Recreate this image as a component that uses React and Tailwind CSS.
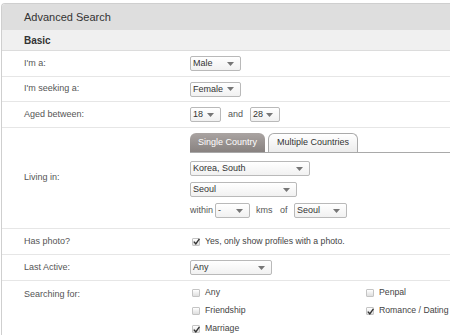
import React from "react";

const Arrow = () => (
  <svg width="7" height="4" viewBox="0 0 7 4" className="shrink-0">
    <path d="M0 0 L7 0 L3.5 4 Z" fill="#767676" />
  </svg>
);

const Select = ({ value, width }) => (
  <div
    className={`h-[15px] ${width} flex items-center justify-between border border-[#b9b9b9] rounded-[2px] bg-gradient-to-b from-white to-[#f1f1f1] pl-[2px] pr-[6px] text-[9px] text-[#333] leading-none`}
  >
    <span>{value}</span>
    <Arrow />
  </div>
);

const Check = ({ checked, label }) => (
  <div className="flex items-center gap-[5px] h-[18px] whitespace-nowrap">
    <div className="w-[8px] h-[8px] shrink-0 border border-[#c4c4c4] rounded-[1px] bg-gradient-to-b from-white to-[#dedede] flex items-center justify-center">
      {checked && (
        <svg width="7" height="7" viewBox="0 0 7 7" className="shrink-0">
          <path d="M0.8 3.6 L2.8 5.8 L6.4 0.8" stroke="#333" strokeWidth="1.4" fill="none" />
        </svg>
      )}
    </div>
    <span className="text-[8.7px] text-[#444]">{label}</span>
  </div>
);

const Row = ({ label, children }) => (
  <div className="flex border-b border-[#e6e6e6]">
    <div className="w-[188px] shrink-0 pl-[22px] text-[9px] text-[#555] flex items-center">{label}</div>
    <div className="flex-1 min-w-0">{children}</div>
  </div>
);

export default function App() {
  return (
    <div className="w-[450px] h-[335px] overflow-hidden bg-white font-['Liberation_Sans',Arial,sans-serif]">
      <div className="mt-[3px] ml-[1px] border-l border-t border-[#cfcfcf] rounded-tl-[4px] overflow-hidden">
        <div className="h-[26px] bg-[#dedede] pl-[22px] flex items-center text-[11px] text-[#333]">
          Advanced Search
        </div>
        <div className="h-[21px] bg-[#f0f0f0] border-b border-[#dcdcdc] pl-[22px] flex items-center text-[10px] font-bold text-[#333]">
          Basic
        </div>

        <Row label="I'm a:">
          <div className="h-[25px] flex items-center">
            <Select value="Male" width="w-[51px]" />
          </div>
        </Row>
        <Row label="I'm seeking a:">
          <div className="h-[24px] flex items-center">
            <Select value="Female" width="w-[51px]" />
          </div>
        </Row>
        <Row label="Aged between:">
          <div className="h-[25px] flex items-center gap-[6px] text-[9px] text-[#555]">
            <Select value="18" width="w-[31px]" />
            <span className="px-[1px]">and</span>
            <Select value="28" width="w-[30px]" />
          </div>
        </Row>

        <Row label="Living in:">
          <div className="pt-[5px] pb-[10px]">
            <div className="flex items-end gap-[3px] border-b border-[#a9a9a9] h-[20px]">
              <div className="h-[19px] px-[8px] flex items-center rounded-t-[6px] bg-gradient-to-b from-[#aaa4a2] to-[#888280] text-[9px] text-white">
                Single Country
              </div>
              <div className="h-[19px] px-[8px] flex items-center rounded-t-[6px] border border-b-0 border-[#aaaaaa] bg-gradient-to-b from-white to-[#ececec] text-[9px] text-[#333]">
                Multiple Countries
              </div>
            </div>
            <div className="mt-[8px] flex flex-col gap-[6px]">
              <Select value="Korea, South" width="w-[120px]" />
              <Select value="Seoul" width="w-[107px]" />
              <div className="flex items-center text-[9px] text-[#555]">
                <span className="w-[25px]">within</span>
                <Select value="-" width="w-[35px]" />
                <span className="ml-[6px] w-[24px]">kms</span>
                <span className="w-[14px]">of</span>
                <Select value="Seoul" width="w-[53px]" />
              </div>
            </div>
          </div>
        </Row>

        <Row label="Has photo?">
          <div className="h-[25px] flex items-center pl-[2px]">
            <Check checked label="Yes, only show profiles with a photo." />
          </div>
        </Row>
        <Row label="Last Active:">
          <div className="h-[25px] flex items-center">
            <Select value="Any" width="w-[82px]" />
          </div>
        </Row>

        <div className="flex">
          <div className="w-[188px] shrink-0 pl-[22px] pt-[7px] text-[9px] text-[#555]">Searching for:</div>
          <div className="flex-1 pt-[3px] pl-[2px] grid grid-cols-[174px_1fr]">
            <Check label="Any" />
            <Check label="Penpal" />
            <Check label="Friendship" />
            <Check checked label="Romance / Dating" />
            <Check checked label="Marriage" />
          </div>
        </div>
      </div>
    </div>
  );
}
